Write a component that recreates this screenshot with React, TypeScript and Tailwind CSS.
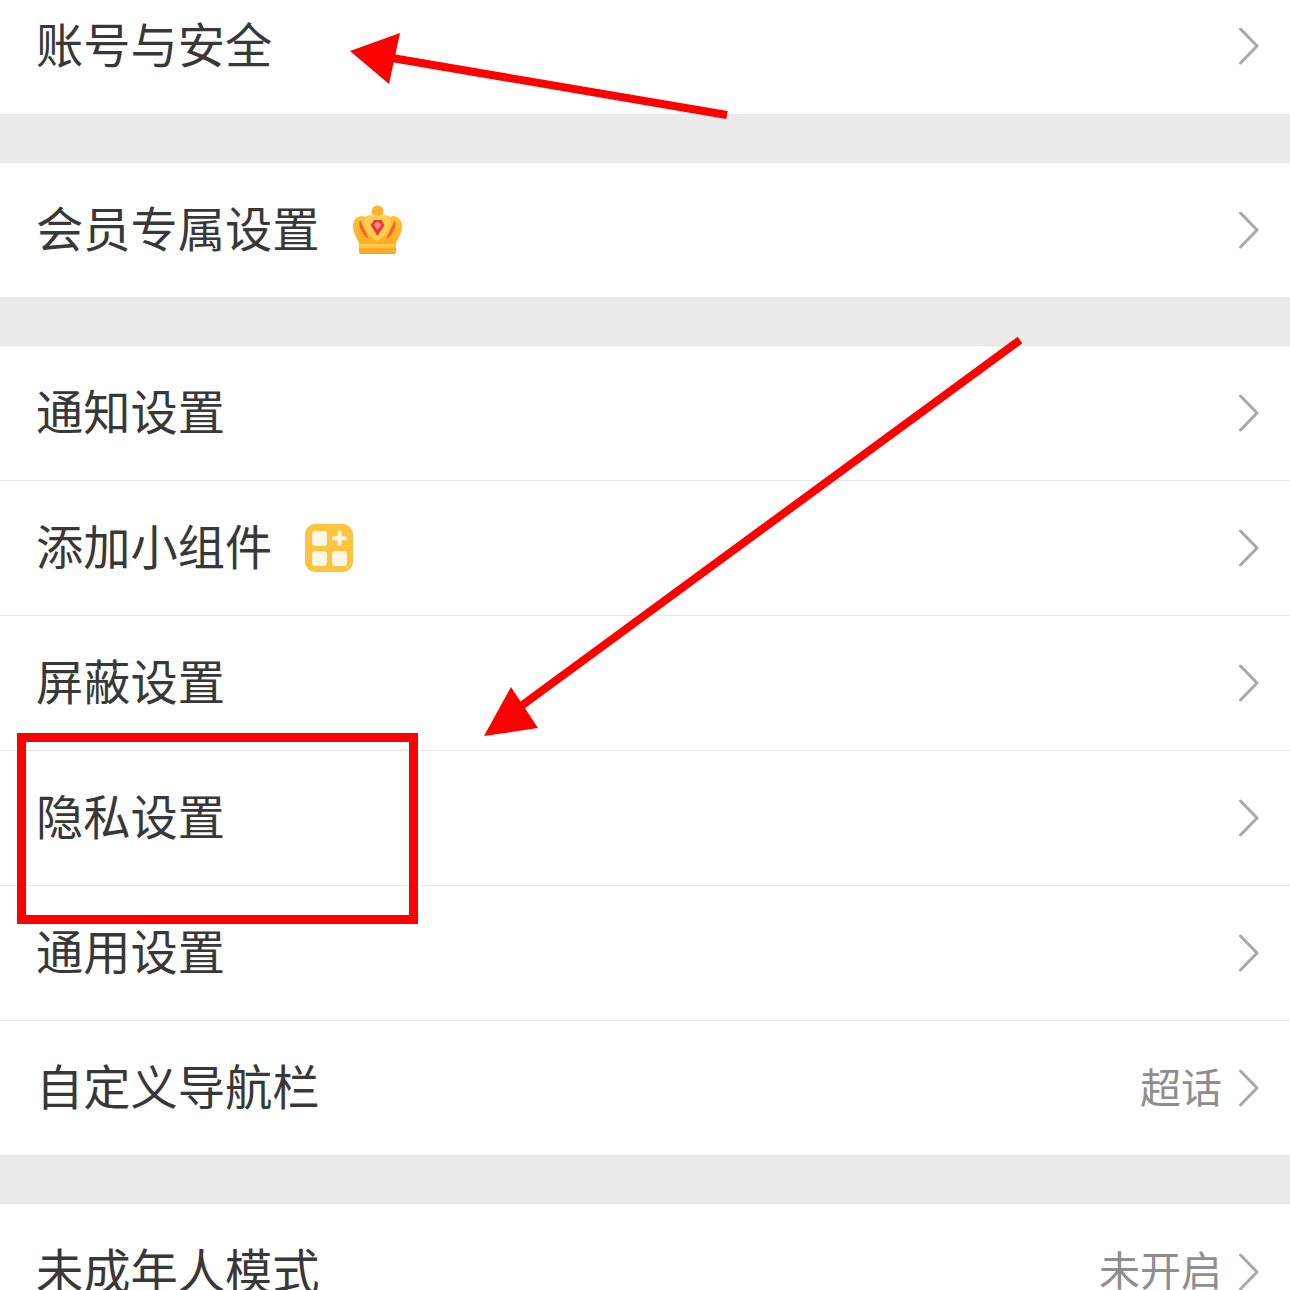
import React from 'react';

const Chevron: React.FC = () => (
  <svg width="22" height="38" viewBox="0 0 22 38" fill="none" className="shrink-0">
    <path d="M2.500 2 L19 19 L2.500 36" stroke="#a8a8a8" strokeWidth="3" strokeLinecap="round" strokeLinejoin="round" />
  </svg>
);

const Crown: React.FC = () => (
  <svg width="50" height="50" viewBox="0 0 50 50" className="ml-[33px] mb-[1px] shrink-0">
    <defs>
      <linearGradient id="crownBody" x1="0" y1="0" x2="0" y2="1">
        <stop offset="0" stopColor="#ffc23a" />
        <stop offset="1" stopColor="#ffa31f" />
      </linearGradient>
      <linearGradient id="crownBand" x1="0" y1="0" x2="0" y2="1">
        <stop offset="0" stopColor="#ffd24d" />
        <stop offset="1" stopColor="#ff9f1e" />
      </linearGradient>
    </defs>
    <circle cx="24.500" cy="6.500" r="6" fill="#fdb42c" />
    <path d="M24.500 13 C30 9 35 10 37 12 C42 9 49 13 49 21 C49 28 45 33 43 38 L42 49 H7 L6 38 C4 33 0 28 0 21 C0 13 7 9 12 12 C14 10 19 9 24.500 13 Z" fill="url(#crownBody)" />
    <path d="M7 15 C5 20 8 29 16 34 C13 28 10 21 7 15 Z" fill="#f2632a" />
    <path d="M42 15 C44 20 41 29 33 34 C36 28 39 21 42 15 Z" fill="#f2632a" />
    <path d="M24.500 11 C31 8 39 12 38 20 C37 27 30 31 24.500 37 C19 31 12 27 11 20 C10 12 18 8 24.500 11 Z" fill="#ffd04f" />
    <path d="M17.500 20 L21 15 H28.500 L31.500 20 L24.500 31 Z" fill="#f0353f" />
    <path d="M21 19.500 L24.500 16.500 L28.500 19.500 L24.500 25 Z" fill="#ff8f8f" />
    <rect x="6" y="39" width="37" height="10" rx="3" fill="url(#crownBand)" />
    <rect x="6" y="43.500" width="37" height="1.500" fill="#f7a11c" />
  </svg>
);

const WidgetIcon: React.FC = () => (
  <svg width="48" height="48" viewBox="0 0 48 48" className="ml-[33px] shrink-0">
    <rect x="0" y="0" width="48" height="48" rx="10" fill="#fcc43f" />
    <rect x="7" y="7" width="15" height="15" rx="3.500" fill="#fff6e6" />
    <rect x="7" y="27" width="15" height="15" rx="3.500" fill="#fff6e6" />
    <rect x="27" y="27" width="15" height="15" rx="3.500" fill="#fff6e6" />
    <path d="M34.500 8.500 V20 M29 14.200 H40" stroke="#fff6e6" strokeWidth="4" strokeLinecap="round" />
  </svg>
);

const Row: React.FC<{
  title: string;
  value?: string;
  icon?: React.ReactNode;
  divider?: boolean;
  className?: string;
}> = ({ title, value, icon, divider, className }) => (
  <div className={`flex items-center bg-white pl-[36px] pr-[30px] ${divider ? 'border-t border-[#e8e8e8]' : ''} ${className ?? 'h-[135px]'}`}>
    <span className="mb-[6px] text-[47.25px] leading-none text-[#383838] whitespace-nowrap">{title}</span>
    {icon}
    <div className="ml-auto flex items-center gap-[16px]">
      {value && <span className="mb-[6px] text-[41px] leading-none text-[#8e8e8e] whitespace-nowrap">{value}</span>}
      <Chevron />
    </div>
  </div>
);

const Gap: React.FC = () => <div className="h-[49px] bg-[#ebebeb] border-b border-[#e3e3e3]" />;

export default function App() {
  return (
    <div className="relative w-[1290px] h-[1290px] overflow-hidden bg-white font-['Noto_Sans_CJK_SC','Noto_Sans',sans-serif]">
      <Row title="账号与安全" className="h-[114px] pb-[22px]" />
      <Gap />
      <Row title="会员专属设置" icon={<Crown />} className="h-[134px]" />
      <Gap />
      <Row title="通知设置" className="h-[134px]" />
      <Row title="添加小组件" icon={<WidgetIcon />} divider />
      <Row title="屏蔽设置" divider />
      <Row title="隐私设置" divider />
      <Row title="通用设置" divider />
      <Row title="自定义导航栏" value="超话" divider />
      <Gap />
      <Row title="未成年人模式" value="未开启" />

      {/* annotations on top of the screenshot */}
      <div className="absolute left-[17px] top-[733px] w-[401px] h-[191px] border-[9px] border-[#ff0000]" />
      <svg className="absolute inset-0" width="1290" height="1290" viewBox="0 0 1290 1290" fill="none">
        <path d="M727 115 L392 58" stroke="#ff0000" strokeWidth="8" />
        <path d="M350 51 L400 33 L389 84 Z" fill="#ff0000" />
        <path d="M1020 340 L517 709" stroke="#ff0000" strokeWidth="8" />
        <path d="M484 736 L511 687 L538 728 Z" fill="#ff0000" />
      </svg>
    </div>
  );
}
